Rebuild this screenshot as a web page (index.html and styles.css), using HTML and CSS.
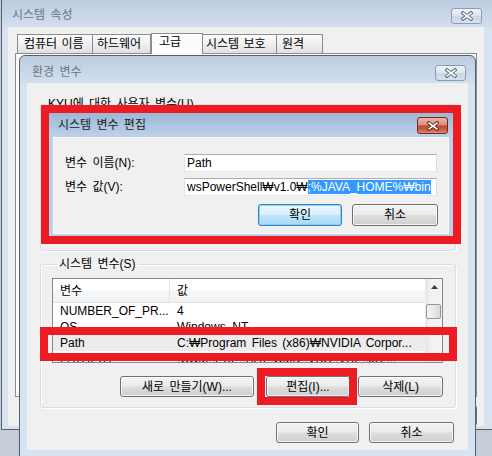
FILE: index.html
```html
<!DOCTYPE html>
<html lang="ko">
<head>
<meta charset="utf-8">
<title>시스템 변수 편집</title>
<link rel="stylesheet" href="styles.css">
</head>
<body>
<div class="desktop">

  <section class="win win-outer inactive">
    <header class="titlebar">
      <span class="title outer-title">시스템 속성</span>
      <span class="close close-inactive outer-close">
        <svg width="12" height="10" viewBox="0 0 12 10"><path class="x-out" d="M2 2 L10 8 M10 2 L2 8"/><path class="x-in" d="M2 2 L10 8 M10 2 L2 8"/></svg>
      </span>
    </header>
    <div class="client outer-client">
      <div class="tabs">
        <span class="tab tab1">컴퓨터 이름</span>
        <span class="tab tab2">하드웨어</span>
        <span class="tab tab3 selected">고급</span>
        <span class="tab tab4">시스템 보호</span>
        <span class="tab tab5">원격</span>
      </div>
      <div class="tabpanel"></div>
      <div class="outer-buttons"><span class="btn btn-apply">적용(A)</span></div>
    </div>
  </section>

  <section class="win win-env inactive">
    <header class="titlebar">
      <span class="title env-title">환경 변수</span>
      <span class="close close-inactive env-close">
        <svg width="12" height="10" viewBox="0 0 12 10"><path class="x-out" d="M2 2 L10 8 M10 2 L2 8"/><path class="x-in" d="M2 2 L10 8 M10 2 L2 8"/></svg>
      </span>
    </header>
    <div class="client env-client">
      <fieldset class="group group-user">
        <legend>KYU에 대한 사용자 변수(U)</legend>
      </fieldset>
      <fieldset class="group group-sys">
        <legend>시스템 변수(S)</legend>
        <div class="listview">
          <div class="lv-main">
            <div class="lv-head">
              <span class="col col1">변수</span>
              <span class="col col2">값</span>
            </div>
            <div class="lv-row"><span class="col col1">NUMBER_OF_PR...</span><span class="col col2">4</span></div>
            <div class="lv-row"><span class="col col1">OS</span><span class="col col2">Windows_NT</span></div>
            <div class="lv-row lv-selected"><span class="col col1">Path</span><span class="col col2">C:₩Program Files (x86)₩NVIDIA Corpor...</span></div>
            <div class="lv-row"><span class="col col1">PATHEXT</span><span class="col col2">.COM;.EXE;.BAT;.CMD;.VBS;.VBE;.JS;...</span></div>
          </div>
          <div class="scrollbar">
            <span class="sb-up">
              <svg width="7" height="4" viewBox="0 0 7 4"><path d="M0 4 L3.5 0 L7 4 Z" fill="#404040"/></svg>
            </span>
            <span class="sb-thumb"></span>
          </div>
        </div>
        <div class="group-buttons">
          <span class="btn btn-new">새로 만들기(W)...</span>
          <span class="btn btn-edit">편집(I)...</span>
          <span class="btn btn-del">삭제(L)</span>
        </div>
      </fieldset>
      <div class="env-buttons">
        <span class="btn btn-ok">확인</span>
        <span class="btn btn-cancel">취소</span>
      </div>
    </div>
  </section>

  <section class="win win-edit active">
    <header class="titlebar">
      <span class="title edit-title">시스템 변수 편집</span>
      <span class="close close-active edit-close">
        <svg width="12" height="10" viewBox="0 0 12 10"><path class="x-out red" d="M2 2 L10 8 M10 2 L2 8"/><path class="x-in" d="M2 2 L10 8 M10 2 L2 8"/></svg>
      </span>
    </header>
    <div class="client edit-client">
      <div class="field">
        <span class="field-label">변수 이름(N):</span>
        <span class="input">Path</span>
      </div>
      <div class="field">
        <span class="field-label">변수 값(V):</span>
        <span class="input">wsPowerShell₩v1.0₩<span class="sel">;%JAVA_HOME%₩bin</span></span>
      </div>
      <div class="edit-buttons">
        <span class="btn btn-default">확인</span>
        <span class="btn btn-edit-cancel">취소</span>
      </div>
    </div>
  </section>

  <div class="mark mark-edit"></div>
  <div class="mark mark-path"></div>
  <div class="mark mark-btn"></div>
</div>
</body>
</html>
```

FILE: styles.css
```css
* { box-sizing: border-box; }

html, body { margin: 0; padding: 0; }

body {
  width: 492px;
  height: 456px;
  overflow: hidden;
  font-family: "Liberation Sans", "Noto Sans CJK KR", sans-serif;
  font-size: 12px;
  line-height: 14px;
  word-spacing: 2px;
  color: #000;
  background: #c6cdd7;
}

.desktop {
  position: relative;
  width: 492px;
  height: 456px;
  overflow: hidden;
}

/* ---------- windows ---------- */
.win {
  position: absolute;
  display: flex;
  flex-direction: column;
  border: 1px solid #56606c;
}

.inactive {
  background: linear-gradient(#bccce0, #d3dfee) 0 0 / 100% 28px no-repeat, #d7e3f1;
}

.active {
  background: linear-gradient(#9db7d6, #bed3ea) 0 0 / 100% 25px no-repeat, #bcd1e9;
  border-color: #34465c;
}

.titlebar {
  display: flex;
  align-items: flex-start;
  flex: none;
}

.title { white-space: nowrap; }
.inactive .title { color: #6a7784; }
.active .title { color: #1a1a1a; }

.close {
  display: flex;
  align-items: center;
  justify-content: center;
  width: 31px;
  height: 16px;
  border-radius: 3px;
}

.close-inactive {
  border: 1px solid #8b9cb3;
  background: linear-gradient(#eef3f9 0%, #dbe4ef 48%, #c9d6e6 52%, #d6e1ee 100%);
}

.close-active {
  border: 1px solid #6d2c22;
  background: linear-gradient(#ebb3a6 0%, #dc8f7e 46%, #c4482f 52%, #cf5a3f 78%, #e38a6d 100%);
  height: 17px;
}

.x-out { fill: none; stroke: #55606e; stroke-width: 3.4; stroke-linecap: square; }
.x-out.red { stroke: #5a1d14; }
.x-in { fill: none; stroke: #ffffff; stroke-width: 1.6; stroke-linecap: square; }

.client {
  flex: 1;
  display: flex;
  flex-direction: column;
  background: #f0f0f0;
}

/* ---------- outer: 시스템 속성 ---------- */
.win-outer {
  left: 1px;
  top: -1px;
  width: 492px;
  height: 431px;
  padding: 0 8px 3px 6px;
}

.win-outer .titlebar { height: 27px; }
.outer-title { margin: 8px 0 0 4px; }
.outer-close { margin: 8px 2px 0 auto; }

.outer-client { padding: 6px 7px 0 7px; }

.tabs {
  position: relative;
  z-index: 1;
  display: flex;
  align-items: flex-end;
  height: 21px;
  margin-bottom: -1px;
  padding-left: 2px;
}

.tab {
  height: 19px;
  margin-bottom: 1px;
  padding-top: 2px;
  border: 1px solid #898c95;
  border-bottom: none;
  background: linear-gradient(#fdfdfd 0%, #efefef 50%, #e1e1e1 100%);
  white-space: nowrap;
  word-spacing: 1px;
}

.tab.selected {
  height: 21px;
  margin-bottom: 0;
  padding-top: 1px;
  background: #fcfcfc;
}

.tab1 { width: 76px; padding-left: 6px; }
.tab2 { width: 58px; padding-left: 4px; border-left: none; }
.tab3 { width: 52px; padding-left: 7px; }
.tab4 { width: 74px; padding-left: 3px; border-left: none; }
.tab5 { width: 46px; padding-left: 5px; border-left: none; }

.tabpanel {
  width: 462px;
  height: 344px;
  border: 1px solid #898c95;
  background: #fcfcfc;
}

.outer-buttons {
  display: flex;
  justify-content: flex-end;
  margin-top: 8px;
}

.btn-apply { width: 75px; }

/* ---------- buttons ---------- */
.btn {
  display: flex;
  align-items: center;
  justify-content: center;
  height: 21px;
  border: 1px solid #707070;
  border-radius: 3px;
  background: linear-gradient(#f3f3f3 0%, #ebebeb 48%, #dddddd 52%, #cfcfcf 100%);
  box-shadow: inset 0 0 0 1px rgba(255, 255, 255, 0.75);
  white-space: nowrap;
}

/* ---------- 환경 변수 ---------- */
.win-env {
  left: 19px;
  top: 55px;
  width: 457px;
  height: 403px;
  padding: 0 7px 7px 7px;
  border-radius: 6px 6px 0 0;
}

.win-env .titlebar { height: 27px; }
.env-title { margin: 9px 0 0 5px; }
.env-close { margin: 9px 2px 0 auto; }

.env-client { padding: 14px 12px 0 13px; }

.group {
  margin: 0;
  padding: 0;
  min-width: 0;
  border: 1px solid #d5dfe5;
  border-radius: 3px;
  box-shadow: inset 1px 1px 0 #ffffff, 1px 1px 0 #ffffff;
}

.group legend {
  margin-left: 5px;
  padding: 0 2px;
  line-height: 14px;
}

.group-user { height: 154px; }

.group-sys {
  margin-top: 6px;
  padding: 0 12px 10px 11px;
}

.listview {
  display: flex;
  width: 391px;
  height: 85px;
  margin-top: 7px;
  border: 1px solid #828790;
  background: #ffffff;
}

.lv-main {
  flex: 1;
  min-width: 0;
  overflow: hidden;
}

.lv-head {
  display: flex;
  align-items: center;
  height: 24px;
  border-bottom: 1px solid #dfe2e6;
  background: linear-gradient(#ffffff 0%, #ffffff 48%, #f5f6f8 52%, #f1f2f4 100%);
}

.lv-head .col1 {
  align-self: stretch;
  display: flex;
  align-items: center;
  border-right: 1px solid #e3e5e8;
}

.col { white-space: nowrap; overflow: hidden; }
.col1 { width: 117px; flex: none; padding-left: 7px; }
.col2 { flex: 1; padding-left: 7px; }

.lv-row {
  display: flex;
  align-items: center;
  height: 16px;
}

.lv-selected { background: #ececec; }

.scrollbar {
  width: 17px;
  flex: none;
  display: flex;
  flex-direction: column;
  background: linear-gradient(90deg, #e6e6e6 0%, #f2f2f2 30%, #f2f2f2 100%);
  border-left: 1px solid #ececec;
}

.sb-up {
  height: 17px;
  display: flex;
  align-items: center;
  justify-content: center;
  padding-bottom: 2px;
}

.sb-thumb {
  width: 15px;
  height: 15px;
  margin-top: 8px;
  border: 1px solid #979797;
  border-radius: 2px;
  background: linear-gradient(90deg, #f4f4f4 0%, #e8e8e8 50%, #d8d8d8 100%);
}

.group-buttons {
  display: flex;
  justify-content: flex-end;
  margin-top: 13px;
}

.btn-new { width: 134px; margin-right: 12px; }
.btn-edit { width: 84px; margin-right: 8px; }
.btn-del { width: 85px; }

.env-buttons {
  display: flex;
  justify-content: flex-end;
  margin: 14px 2px 0 0;
}

.btn-ok { width: 83px; margin-right: 10px; }
.btn-cancel { width: 85px; }

/* ---------- 시스템 변수 편집 ---------- */
.win-edit {
  left: 48px;
  top: 112px;
  width: 406px;
  height: 125px;
  padding: 0 4px 2px 4px;
  z-index: 2;
}

.win-edit .titlebar { height: 24px; }
.edit-title { margin: 5px 0 0 5px; }
.edit-close { margin: 4px 1px 0 auto; }

.edit-client {
  padding: 17px 12px 0 12px;
  box-shadow: inset 0 0 0 1px #f8fbfe;
}

.field {
  display: flex;
  align-items: center;
  margin-bottom: 6px;
}

.field-label { width: 119px; flex: none; white-space: nowrap; }

.input {
  display: flex;
  align-items: center;
  width: 253px;
  height: 18px;
  padding-left: 2px;
  border: 1px solid;
  border-color: #abadb3 #dbdfe6 #e3e9ef #e2e3ea;
  background: #ffffff;
  white-space: nowrap;
  overflow: hidden;
}

.sel {
  background: #3399ff;
  color: #ffffff;
  line-height: 14px;
}

.edit-buttons {
  display: flex;
  justify-content: flex-end;
  margin: 2px -1px 0 0;
}

.edit-buttons .btn { height: 22px; }

.btn-default {
  width: 84px;
  margin-right: 10px;
  border-color: #3c7fb1;
  background: linear-gradient(#eaf6fd 0%, #d9f0fc 48%, #bee6fd 52%, #a7d9f5 100%);
  box-shadow: inset 0 0 0 1px #7fd4f7;
}

.btn-edit-cancel { width: 86px; }

/* ---------- red annotations ---------- */
.mark {
  position: absolute;
  z-index: 5;
  border: 8px solid #ed1c24;
}

.mark-edit { left: 41px; top: 105px; width: 420px; height: 139px; }
.mark-path { left: 40px; top: 327px; width: 417px; height: 34px; }
.mark-btn { left: 257px; top: 368px; width: 100px; height: 37px; }
```
